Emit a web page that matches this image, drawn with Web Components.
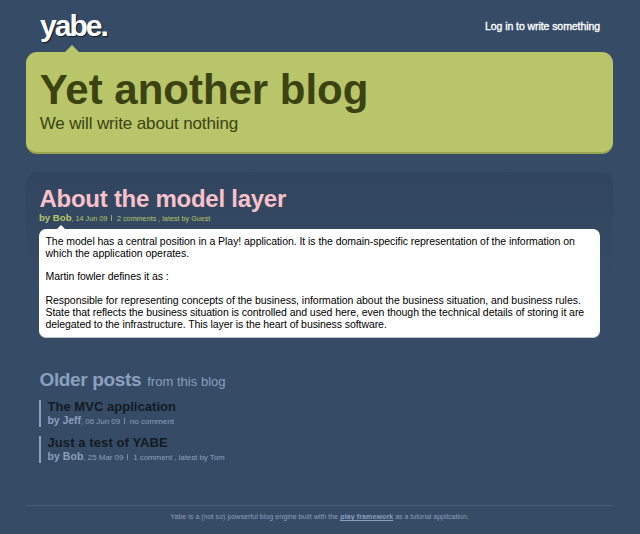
<!DOCTYPE html>
<html lang="en">
<head>
<meta charset="utf-8">
<title>Yet another blog</title>
<style>
html,body{margin:0;background:#364b65;}
body{font-family:"Liberation Sans",Arial,sans-serif;color:#fff}
</style>
</head>
<body>
<yabe-page>
  <yabe-header slot="header"><span slot="logo">yabe.</span><span slot="action">Log in to write something</span></yabe-header>
  <yabe-hero slot="hero"><span slot="title">Yet another blog</span><span slot="tagline">We will write about nothing</span></yabe-hero>
  <yabe-post>
    <span slot="title">About the model layer</span>
    <yabe-meta slot="meta" style="--as:9.6px;--als:0;--ms:7.2px;--mls:.01px;--color:#b8c569">
      <span slot="author">by Bob</span><span slot="date">, 14 Jun 09</span><span slot="info">2 comments , latest by Guest</span>
    </yabe-meta>
    <div style="letter-spacing:-.05px">The model has a central position in a Play! application. It is the domain-specific representation of the information on</div>
    <div style="letter-spacing:-.02px">which the application operates.</div>
    <div>&nbsp;</div>
    <div style="letter-spacing:-.06px">Martin fowler defines it as :</div>
    <div>&nbsp;</div>
    <div style="letter-spacing:-.04px">Responsible for representing concepts of the business, information about the business situation, and business rules.</div>
    <div style="letter-spacing:-.058px">State that reflects the business situation is controlled and used here, even though the technical details of storing it are</div>
    <div style="letter-spacing:-.075px">delegated to the infrastructure. This layer is the heart of business software.</div>
  </yabe-post>
  <yabe-older slot="older">
    <span slot="title">Older posts</span><span slot="from">from this blog</span>
    <yabe-item>
      <span slot="title" style="letter-spacing:.035px">The MVC application</span>
      <yabe-meta slot="meta"><span slot="author">by Jeff</span><span slot="date" style="letter-spacing:-.05px">, 06 Jun 09</span><span slot="info">no comment</span></yabe-meta>
    </yabe-item>
    <yabe-item>
      <span slot="title" style="letter-spacing:.094px">Just a test of YABE</span>
      <yabe-meta slot="meta" style="--als:.06px"><span slot="author">by Bob</span><span slot="date" style="letter-spacing:-.05px">, 25 Mar 09</span><span slot="info" style="letter-spacing:-.07px">1 comment , latest by Tom</span></yabe-meta>
    </yabe-item>
  </yabe-older>
  <yabe-footer slot="footer"><span style="letter-spacing:.05px">Yabe is a (not so) powserful blog engine built with the </span><b style="text-decoration:underline;letter-spacing:.118px">play framework</b> as a tutorial application.</yabe-footer>
</yabe-page>
<script>
const define = (name, html) => customElements.define(name, class extends HTMLElement {
  constructor() {
    super();
    this.attachShadow({mode: "open"}).innerHTML = html;
  }
});

define("yabe-page", `<style>
:host{display:block;box-sizing:border-box;width:640px;height:534px;padding:0 27px 0 26px;overflow:hidden}
main{display:flex;flex-direction:column;height:100%}
.older{padding-top:31px}
.footer{margin-top:auto}
</style><main><slot name="header"></slot><slot name="hero"></slot><slot></slot><div class="older"><slot name="older"></slot></div><div class="footer"><slot name="footer"></slot></div></main>`);

define("yabe-header", `<style>
:host{display:flex;box-sizing:border-box;height:52px;padding:0 13px 0 14px;justify-content:space-between;align-items:flex-start}
.logo{font:bold 30px/30px "Liberation Sans",Arial,sans-serif;letter-spacing:-1.95px;padding-top:11px;text-shadow:1px 1px 1px #131b27}
.action{font-size:10.5px;line-height:12px;letter-spacing:-.07px;padding-top:19.6px;-webkit-text-stroke:.35px #fff}
</style><div class="logo"><slot name="logo"></slot></div><div class="action"><slot name="action"></slot></div>`);

define("yabe-hero", `<style>
:host{display:block;position:relative;box-sizing:border-box;height:102px;padding:16px 13.7px 0;background:#b8c569;border-bottom:2px solid #99a54e;border-radius:11px;color:#3b4313}
:host::before{content:"";position:absolute;left:39px;top:-7px;border:7px solid transparent;border-top:0;border-bottom-color:#b8c569}
.title{font-size:42px;line-height:44px;font-weight:bold;letter-spacing:-.02px}
.tag{font-size:17px;line-height:20px;letter-spacing:-.13px;margin-top:2px}
</style><div class="title"><slot name="title"></slot></div><div class="tag"><slot name="tagline"></slot></div>`);

define("yabe-post", `<style>
:host{display:block;margin-top:18px;padding:13.5px 13px 0;border-radius:11px;background:linear-gradient(#31455f,#364b65 115px)}
.title{font-size:24px;line-height:26px;font-weight:bold;letter-spacing:-.264px;padding-left:.5px;color:#f9c1ca}
.meta{height:12px;margin:.5px 0 5.3px}
.bubble{position:relative;box-sizing:border-box;height:108.7px;padding:6.7px 6px 0 6.5px;background:#fff;color:#000;border-radius:7px;border-bottom:1.5px solid #c3c6c9;font-size:10.5px;line-height:11.83px;white-space:nowrap}
.bubble::before{content:"";position:absolute;left:18px;top:-4px;border:4px solid transparent;border-top:0;border-bottom-color:#fff}
</style><div class="title"><slot name="title"></slot></div><div class="meta"><slot name="meta"></slot></div><div class="bubble"><slot></slot></div>`);

define("yabe-meta", `<style>
:host{display:flex;align-items:baseline;line-height:12px;white-space:pre;color:var(--color,#8ba0bd);font-size:var(--ms,8px);letter-spacing:var(--mls,0)}
.author{font-size:var(--as,10.5px);font-weight:bold;letter-spacing:var(--als,-.05px)}
.bar{width:1px;height:6px;margin:0 4.8px 0 4px;background:currentColor;opacity:.8}
</style><span class="author"><slot name="author"></slot></span><slot name="date"></slot><i class="bar"></i><slot name="info"></slot>`);

define("yabe-older", `<style>
:host{display:block;padding-left:13px;color:#8ba0bd}
.head{display:flex;align-items:baseline;gap:6px;line-height:22px;height:22px;margin-bottom:9px;padding-left:.5px}
.title{font-size:19px;font-weight:bold;letter-spacing:-.36px}
.from{font-size:13px;letter-spacing:.03px}
.list{display:grid;row-gap:9px}
</style><div class="head"><span class="title"><slot name="title"></slot></span><span class="from"><slot name="from"></slot></span></div><div class="list"><slot></slot></div>`);

define("yabe-item", `<style>
:host{display:block;box-sizing:border-box;height:27px;border-left:2px solid #8ba0bd;padding-left:6.5px}
.title{font-size:13px;line-height:14px;font-weight:bold;color:#131a22}
</style><div class="title"><slot name="title"></slot></div><slot name="meta"></slot>`);

define("yabe-footer", `<style>
:host{display:block;box-sizing:border-box;height:29px;padding-top:6px;border-top:1px solid #485d7a;text-align:center;font-size:7px;line-height:10px;color:#8ba0bd}
</style><slot></slot>`);
</script>
</body>
</html>
